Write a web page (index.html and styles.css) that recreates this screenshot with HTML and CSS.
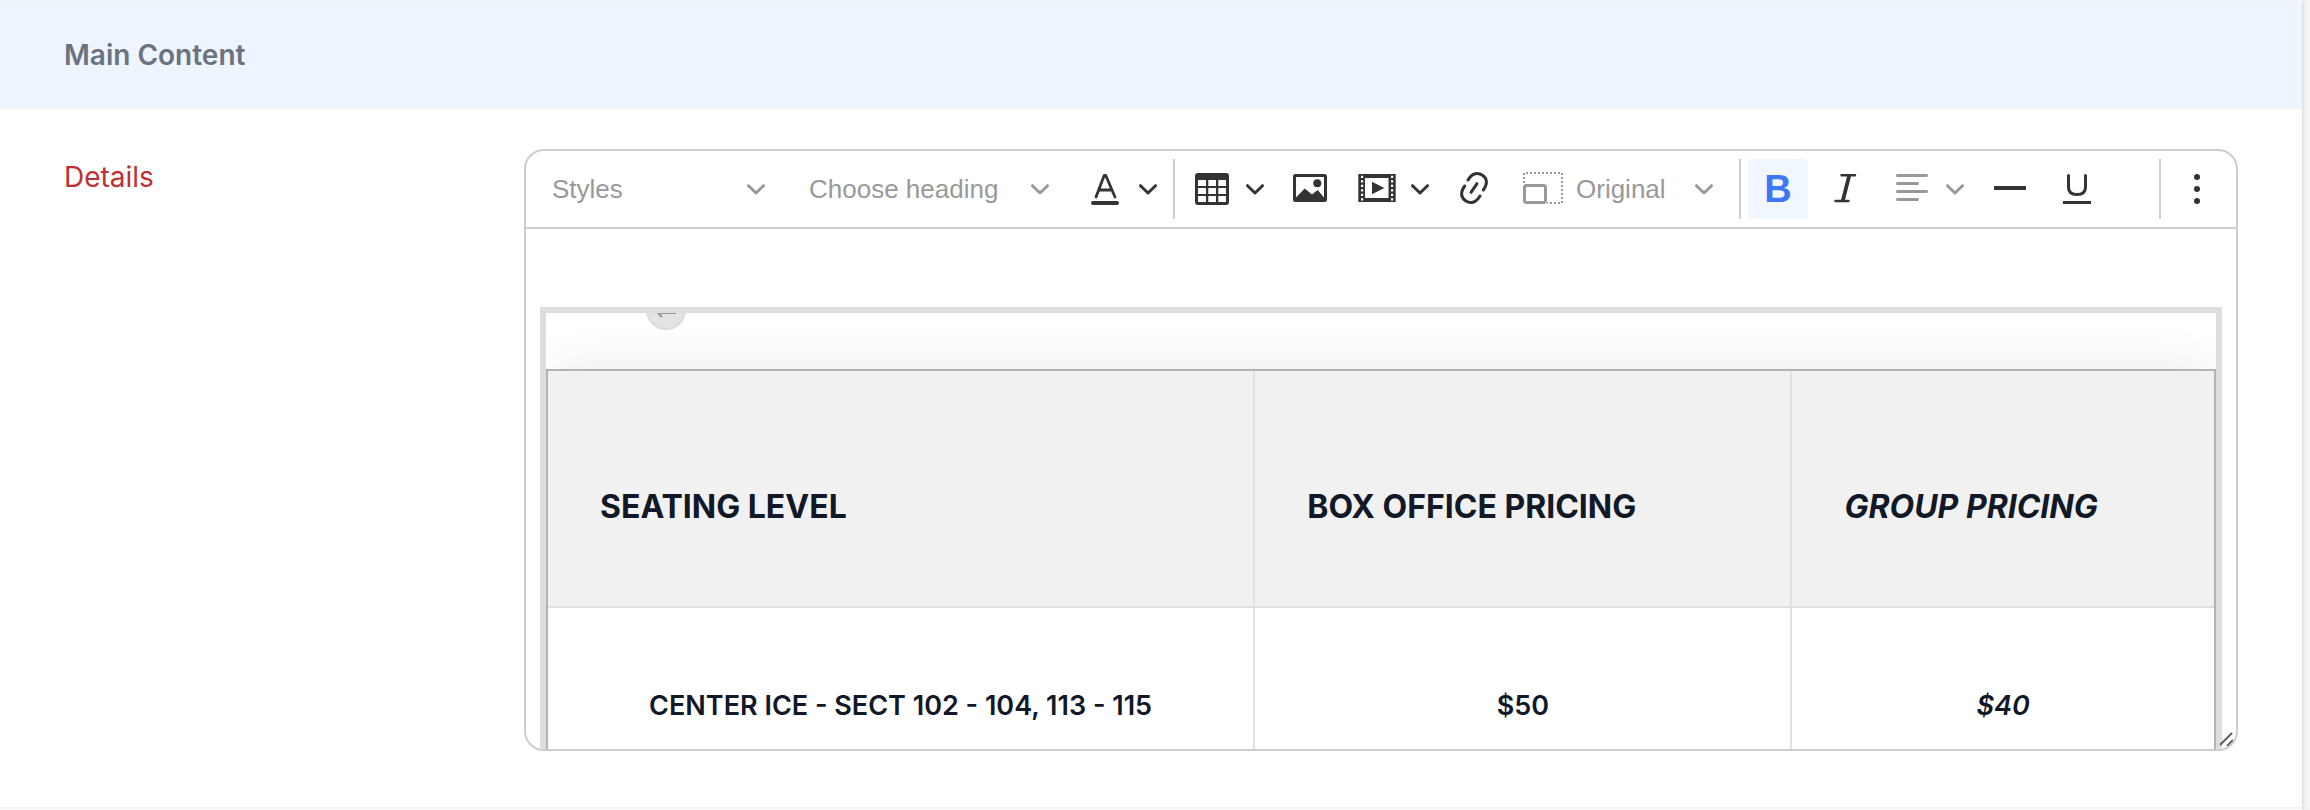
FILE: index.html
```html
<!DOCTYPE html>
<html lang="en">
<head>
<meta charset="utf-8">
<title>Main Content</title>
<link rel="stylesheet" href="styles.css">
</head>
<body>
<svg class="defs" aria-hidden="true">
  <symbol id="chevron" viewBox="0 0 20 20"><path d="M2.5 6.7 10 14l7.500-7.300" fill="none" stroke="currentColor" stroke-width="3" stroke-linecap="round" stroke-linejoin="round"/></symbol>
</svg>
<main class="panel">
  <header class="section-head"><h2 class="section-title">Main Content</h2></header>
  <section class="field">
    <h3 class="field-label" id="details-label">Details</h3>
    <div class="editor" role="group" aria-labelledby="details-label">
      <div class="toolbar" role="toolbar" aria-label="Editor toolbar">
        <div class="drop drop-styles">
          <select class="select" aria-label="Styles"><option>Styles</option></select>
          <svg class="chevron"><use href="#chevron"/></svg>
        </div>
        <div class="drop drop-heading">
          <select class="select" aria-label="Heading"><option>Choose heading</option></select>
          <svg class="chevron"><use href="#chevron"/></svg>
        </div>
        <div class="split">
          <button class="tool" type="button" aria-label="Font color">
            <svg class="icon" viewBox="0 0 40 40"><g fill="none" stroke="currentColor" stroke-linecap="round" stroke-linejoin="round"><path stroke-width="2.8" d="M11 28 19.200 6.500h1.600L30 28M13.800 21h13"/><path stroke-width="4" d="M8 34h24"/></g></svg>
          </button>
          <button class="arrow" type="button" aria-label="Font color options"><svg class="chevron"><use href="#chevron"/></svg></button>
        </div>
        <span class="sep"></span>
        <div class="split">
          <button class="tool" type="button" aria-label="Insert table">
            <svg class="icon" viewBox="0 0 40 40"><path fill="currentColor" fill-rule="evenodd" d="M6 4h28a3 3 0 0 1 3 3v26a3 3 0 0 1-3 3H6a3 3 0 0 1-3-3V7a3 3 0 0 1 3-3zM6 11v6h8v-6zm10.300 0v6H24v-6zm10 0v6H34v-6zM6 19v6h8v-6zm10.300 0v6H24v-6zm10 0v6H34v-6zM6 27v6h8v-6zm10.300 0v6H24v-6zm10 0v6H34v-6z"/></svg>
          </button>
          <button class="arrow" type="button" aria-label="Table options"><svg class="chevron"><use href="#chevron"/></svg></button>
        </div>
        <button class="tool" type="button" aria-label="Insert image">
          <svg class="icon" viewBox="0 0 40 40"><path fill="currentColor" fill-rule="evenodd" d="M5.500 5h29A2.500 2.500 0 0 1 37 7.500v23a2.500 2.500 0 0 1-2.500 2.500h-29A2.500 2.500 0 0 1 3 30.500v-23A2.500 2.500 0 0 1 5.500 5zM6 8v20.500l8.700-9 7.300 6 5.700-4.500 6.300 7.500V8z"/><circle cx="27.300" cy="14.300" r="4" fill="currentColor"/></svg>
        </button>
        <div class="split">
          <button class="tool" type="button" aria-label="Insert media">
            <svg class="icon" viewBox="0 0 40 40"><path fill="currentColor" fill-rule="evenodd" d="M1.300 5h37.400v28H1.300zM8 9v20h23.500V9zM4 6.700v2.200h2.200V6.700zm0 4.500v2.200h2.200v-2.200zm0 4.500v2.200h2.200v-2.200zm0 4.500v2.200h2.200v-2.200zm0 4.500v2.200h2.200v-2.200zm0 4.500v2.200h2.200v-2.200zM34 6.700v2.200h2.200V6.700zm0 4.500v2.200h2.200v-2.200zm0 4.500v2.200h2.200v-2.200zm0 4.500v2.200h2.200v-2.200zm0 4.500v2.200h2.200v-2.200zm0 4.500v2.200h2.200v-2.200z"/><path fill="currentColor" d="M15 12.700 27.300 19 15 25.300z"/></svg>
          </button>
          <button class="arrow" type="button" aria-label="Media options"><svg class="chevron"><use href="#chevron"/></svg></button>
        </div>
        <button class="tool" type="button" aria-label="Link">
          <svg class="icon" viewBox="0 0 40 40"><g fill="none" stroke="currentColor" stroke-width="3" stroke-linecap="round"><path d="M13 11C17.500 3.500 23 3.200 27.500 6.300S33 14.500 28.300 21"/><path d="M25 27C20.500 34.500 15 34.800 10.500 31.700S5 23.500 9.700 17"/><path d="M16 23.300 22 14.700"/></g></svg>
        </button>
        <div class="drop drop-resize">
          <svg class="icon drop-icon" viewBox="0 0 40 40"><g fill="none" stroke="currentColor"><path stroke-width="2" stroke-dasharray="2 2" d="M1 14V4h38v30H24"/><rect x="1.500" y="16.500" width="21" height="17" rx="2" stroke-width="3"/></g></svg>
          <select class="select" aria-label="Resize image"><option>Original</option></select>
          <svg class="chevron"><use href="#chevron"/></svg>
        </div>
        <span class="sep"></span>
        <button class="tool tool-on" type="button" aria-label="Bold" aria-pressed="true">B</button>
        <button class="tool" type="button" aria-label="Italic">
          <svg class="icon" viewBox="0 0 40 40"><g fill="none" stroke="currentColor" stroke-linecap="round"><path stroke-width="2.400" d="M16.500 6.200h13.500M10.500 32h13"/><path stroke-width="3.800" d="M24 7.500 18 31"/></g></svg>
        </button>
        <div class="split">
          <button class="tool muted" type="button" aria-label="Text alignment">
            <svg class="icon" viewBox="0 0 40 40"><path fill="none" stroke="currentColor" stroke-width="3" stroke-linecap="round" d="M5.500 6.500h29M5.500 14.500h20M5.500 22.500h29M5.500 30.500h20"/></svg>
          </button>
          <button class="arrow muted" type="button" aria-label="Alignment options"><svg class="chevron"><use href="#chevron"/></svg></button>
        </div>
        <button class="tool" type="button" aria-label="Horizontal line">
          <svg class="icon" viewBox="0 0 40 40"><path fill="currentColor" d="M4 17h32v4H4z"/></svg>
        </button>
        <button class="tool" type="button" aria-label="Underline">
          <svg class="icon" viewBox="0 0 40 40"><path fill="none" stroke="currentColor" stroke-width="3" stroke-linecap="round" d="M11.500 6.500v11.500c0 5 3 7.500 8.500 7.500s8.500-2.500 8.500-7.500V6.500"/><path fill="currentColor" d="M6 32h28v3H6z"/></svg>
        </button>
        <span class="sep sep-end"></span>
        <button class="tool" type="button" aria-label="Show more items">
          <svg class="icon" viewBox="0 0 40 40"><g fill="currentColor"><circle cx="19" cy="8" r="3"/><circle cx="19" cy="20" r="3"/><circle cx="19" cy="32" r="3"/></g></svg>
        </button>
      </div>
      <div class="content">
        <div class="widget">
          <button class="insert-line" type="button" aria-label="Insert paragraph before block">
            <svg class="insert-icon" viewBox="0 0 20 20"><path fill="none" stroke="currentColor" stroke-width="2" d="M19 5v8H2M6 9l-4 4 4 4"/></svg>
          </button>
          <table class="prices">
            <colgroup><col class="col-level"><col class="col-box"><col></colgroup>
            <thead>
              <tr><th scope="col">SEATING LEVEL</th><th scope="col">BOX OFFICE PRICING</th><th scope="col"><em>GROUP PRICING</em></th></tr>
            </thead>
            <tbody>
              <tr><td>CENTER ICE - SECT 102 - 104, 113 - 115</td><td>$50</td><td><em>$40</em></td></tr>
            </tbody>
          </table>
        </div>
      </div>
      <svg class="grip" viewBox="0 0 16 16" aria-hidden="true"><path d="M1 13 13 1M8 14l6-6" stroke="#5f5f62" stroke-width="2" fill="none"/></svg>
    </div>
  </section>
</main>
</body>
</html>
```

FILE: styles.css
```css
* { box-sizing: border-box; }

body {
  margin: 0;
  background: #f3f4f6;
  font-family: Inter, "Liberation Sans", sans-serif;
  overflow: hidden;
}

.defs { display: none; }

.panel {
  min-height: 100vh;
  margin-right: 8px;
  background: #fff;
  box-shadow: 0 0 4px rgba(0, 0, 0, 0.2);
}

.section-head {
  padding: 37px 64px 36px;
  border-top: 1px solid #f3f4f6;
  border-bottom: 1px solid #f3f4f6;
  background: #eef5fe;
}

.section-title,
.field-label {
  margin: 0;
  font-size: 28px;
  line-height: 34px;
}

.section-title {
  color: #6b7280;
  font-weight: 600;
}

.field {
  display: grid;
  grid-template-columns: 460px 1fr;
  padding: 40px 64px 56px;
  border-bottom: 2px solid #f3f4f6;
}

.field-label {
  padding-top: 11px;
  color: #c02f34;
  font-weight: 400;
}

.editor {
  position: relative;
  min-width: 0;
  border: 2px solid #ccccd2;
  border-radius: 20px;
  overflow: hidden;
}

.toolbar {
  display: flex;
  align-items: center;
  gap: 7px;
  padding: 8px;
  border-bottom: 2px solid #ccccd2;
  color: #333;
}

.drop {
  display: grid;
  grid-template-columns: 1fr;
  align-items: center;
  color: #999;
}

.drop-styles { width: 250px; }
.drop-heading { width: 277px; }
.drop-resize { width: 220px; }

.select {
  grid-area: 1 / 1;
  width: 100%;
  height: 60px;
  padding: 0 44px 0 18px;
  border: 0;
  background: transparent;
  color: inherit;
  appearance: none;
  font: 26px/32px "Liberation Sans", Arial, sans-serif;
}

.drop-resize .select { padding-left: 64px; }

.drop > svg {
  grid-area: 1 / 1;
  pointer-events: none;
}

.drop .chevron {
  justify-self: end;
  margin-right: 18px;
}

.drop-icon { margin-left: 11px; }

.chevron {
  display: block;
  width: 20px;
  height: 20px;
}

.icon {
  display: block;
  width: 40px;
  height: 40px;
}

.split { display: flex; }

.tool,
.arrow {
  display: flex;
  align-items: center;
  justify-content: center;
  height: 60px;
  padding: 0;
  border: 0;
  border-radius: 4px;
  background: transparent;
  color: inherit;
}

.tool { width: 60px; }

.arrow {
  width: 31px;
  padding-right: 5px;
}

.tool.muted,
.arrow.muted { color: #999; }

.tool-on {
  background: #f0f7ff;
  color: #3f77f9;
  font: bold 38px/60px "Liberation Sans", Arial, sans-serif;
}

.sep {
  width: 2px;
  height: 60px;
  background: #ccccd2;
}

.sep-end { margin-left: auto; }

.content {
  height: 520px;
  padding: 78px 14px 0;
  overflow: hidden;
}

.widget {
  position: relative;
  padding-top: 56px;
  border: 6px solid #dedede;
  overflow: hidden;
}

.insert-line {
  position: absolute;
  top: -23px;
  left: 100px;
  width: 40px;
  height: 40px;
  padding: 8px;
  border: 2px solid #dcdcdc;
  border-radius: 50%;
  background: #e3e3e3;
  color: #999;
}

.insert-icon {
  display: block;
  width: 20px;
  height: 20px;
}

.prices {
  width: 100%;
  table-layout: fixed;
  border: 2px solid #b3b3b3;
  border-spacing: 0;
  color: #111827;
  box-shadow: 0 0 50px -12px rgba(45, 62, 80, 0.2);
}

.col-level { width: 42.45%; }
.col-box { width: 32.25%; }

.prices th {
  padding: 112px 50px 75px 52px;
  border-right: 2px solid #e0e2e6;
  border-bottom: 2px solid #dee2e6;
  background: #f1f1f1;
  font-size: 32px;
  font-weight: 700;
  line-height: 48px;
  text-align: left;
}

.prices td {
  padding: 78px 50px;
  border-right: 2px solid #e0e2e6;
  background: #fff;
  font-size: 27px;
  font-weight: 600;
  line-height: 40px;
  text-align: center;
}

.prices th:last-child,
.prices td:last-child { border-right: 0; }

.grip {
  position: absolute;
  right: 1px;
  bottom: 1px;
  width: 16px;
  height: 16px;
}
```
